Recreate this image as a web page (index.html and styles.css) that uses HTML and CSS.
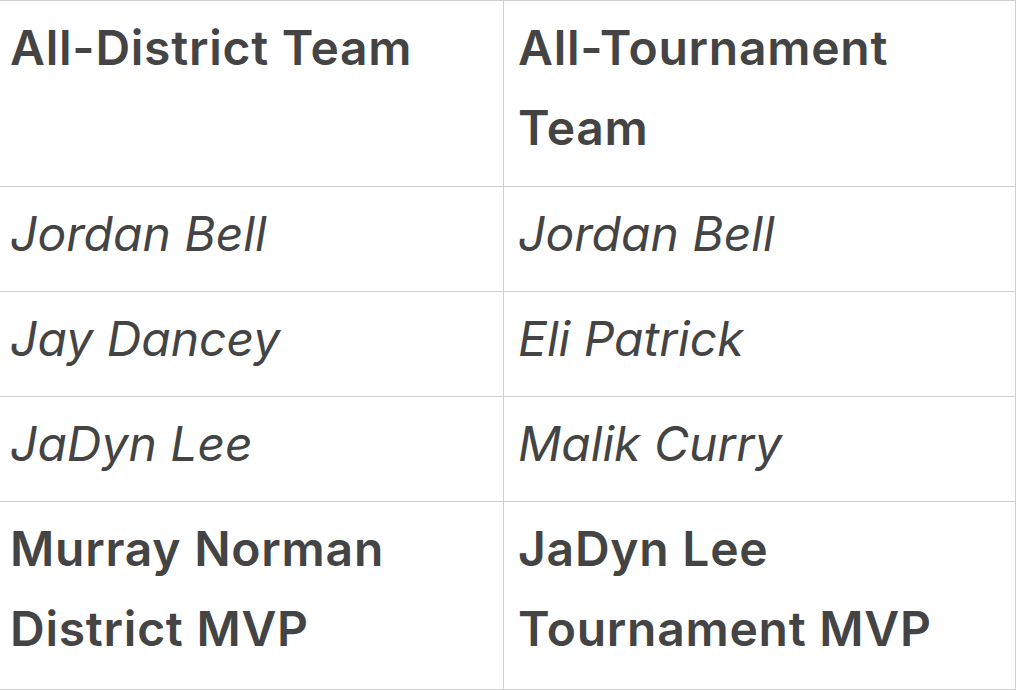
FILE: index.html
```html
<!DOCTYPE html>
<html lang="en">
<head>
<meta charset="utf-8">
<title>Awards</title>
<link rel="stylesheet" href="styles.css">
</head>
<body>
<table class="awards">
  <colgroup>
    <col class="col-left">
    <col class="col-right">
  </colgroup>
  <tr class="row-strong row-head">
    <td>All-District Team</td>
    <td>All-Tournament Team</td>
  </tr>
  <tr class="row-name">
    <td>Jordan Bell</td>
    <td>Jordan Bell</td>
  </tr>
  <tr class="row-name">
    <td>Jay Dancey</td>
    <td>Eli Patrick</td>
  </tr>
  <tr class="row-name">
    <td>JaDyn Lee</td>
    <td>Malik Curry</td>
  </tr>
  <tr class="row-strong row-last">
    <td>Murray Norman<br>District MVP</td>
    <td>JaDyn Lee<br>Tournament MVP</td>
  </tr>
</table>
</body>
</html>
```

FILE: styles.css
```css
html, body {
  margin: 0;
  padding: 0;
  background: #ffffff;
}

.awards {
  border-collapse: collapse;
  table-layout: fixed;
  width: 1020px;
  margin-left: -5px;
  font-family: Inter, "Noto Sans", "Liberation Sans", sans-serif;
  font-size: 48px;
  line-height: 80px;
  color: #444444;
}

.col-left { width: 508px; }
.col-right { width: 512px; }

.awards td {
  border: 1px solid #cfcfcf;
  padding: 7px 14px 17px 14px;
  vertical-align: top;
  text-align: left;
}

.row-strong td {
  font-weight: 600;
  letter-spacing: 0.75px;
}

.row-name td {
  font-style: italic;
  font-weight: 400;
}

.row-head td {
  padding-bottom: 18px;
}

.row-last td {
  padding-bottom: 20px;
}
```
